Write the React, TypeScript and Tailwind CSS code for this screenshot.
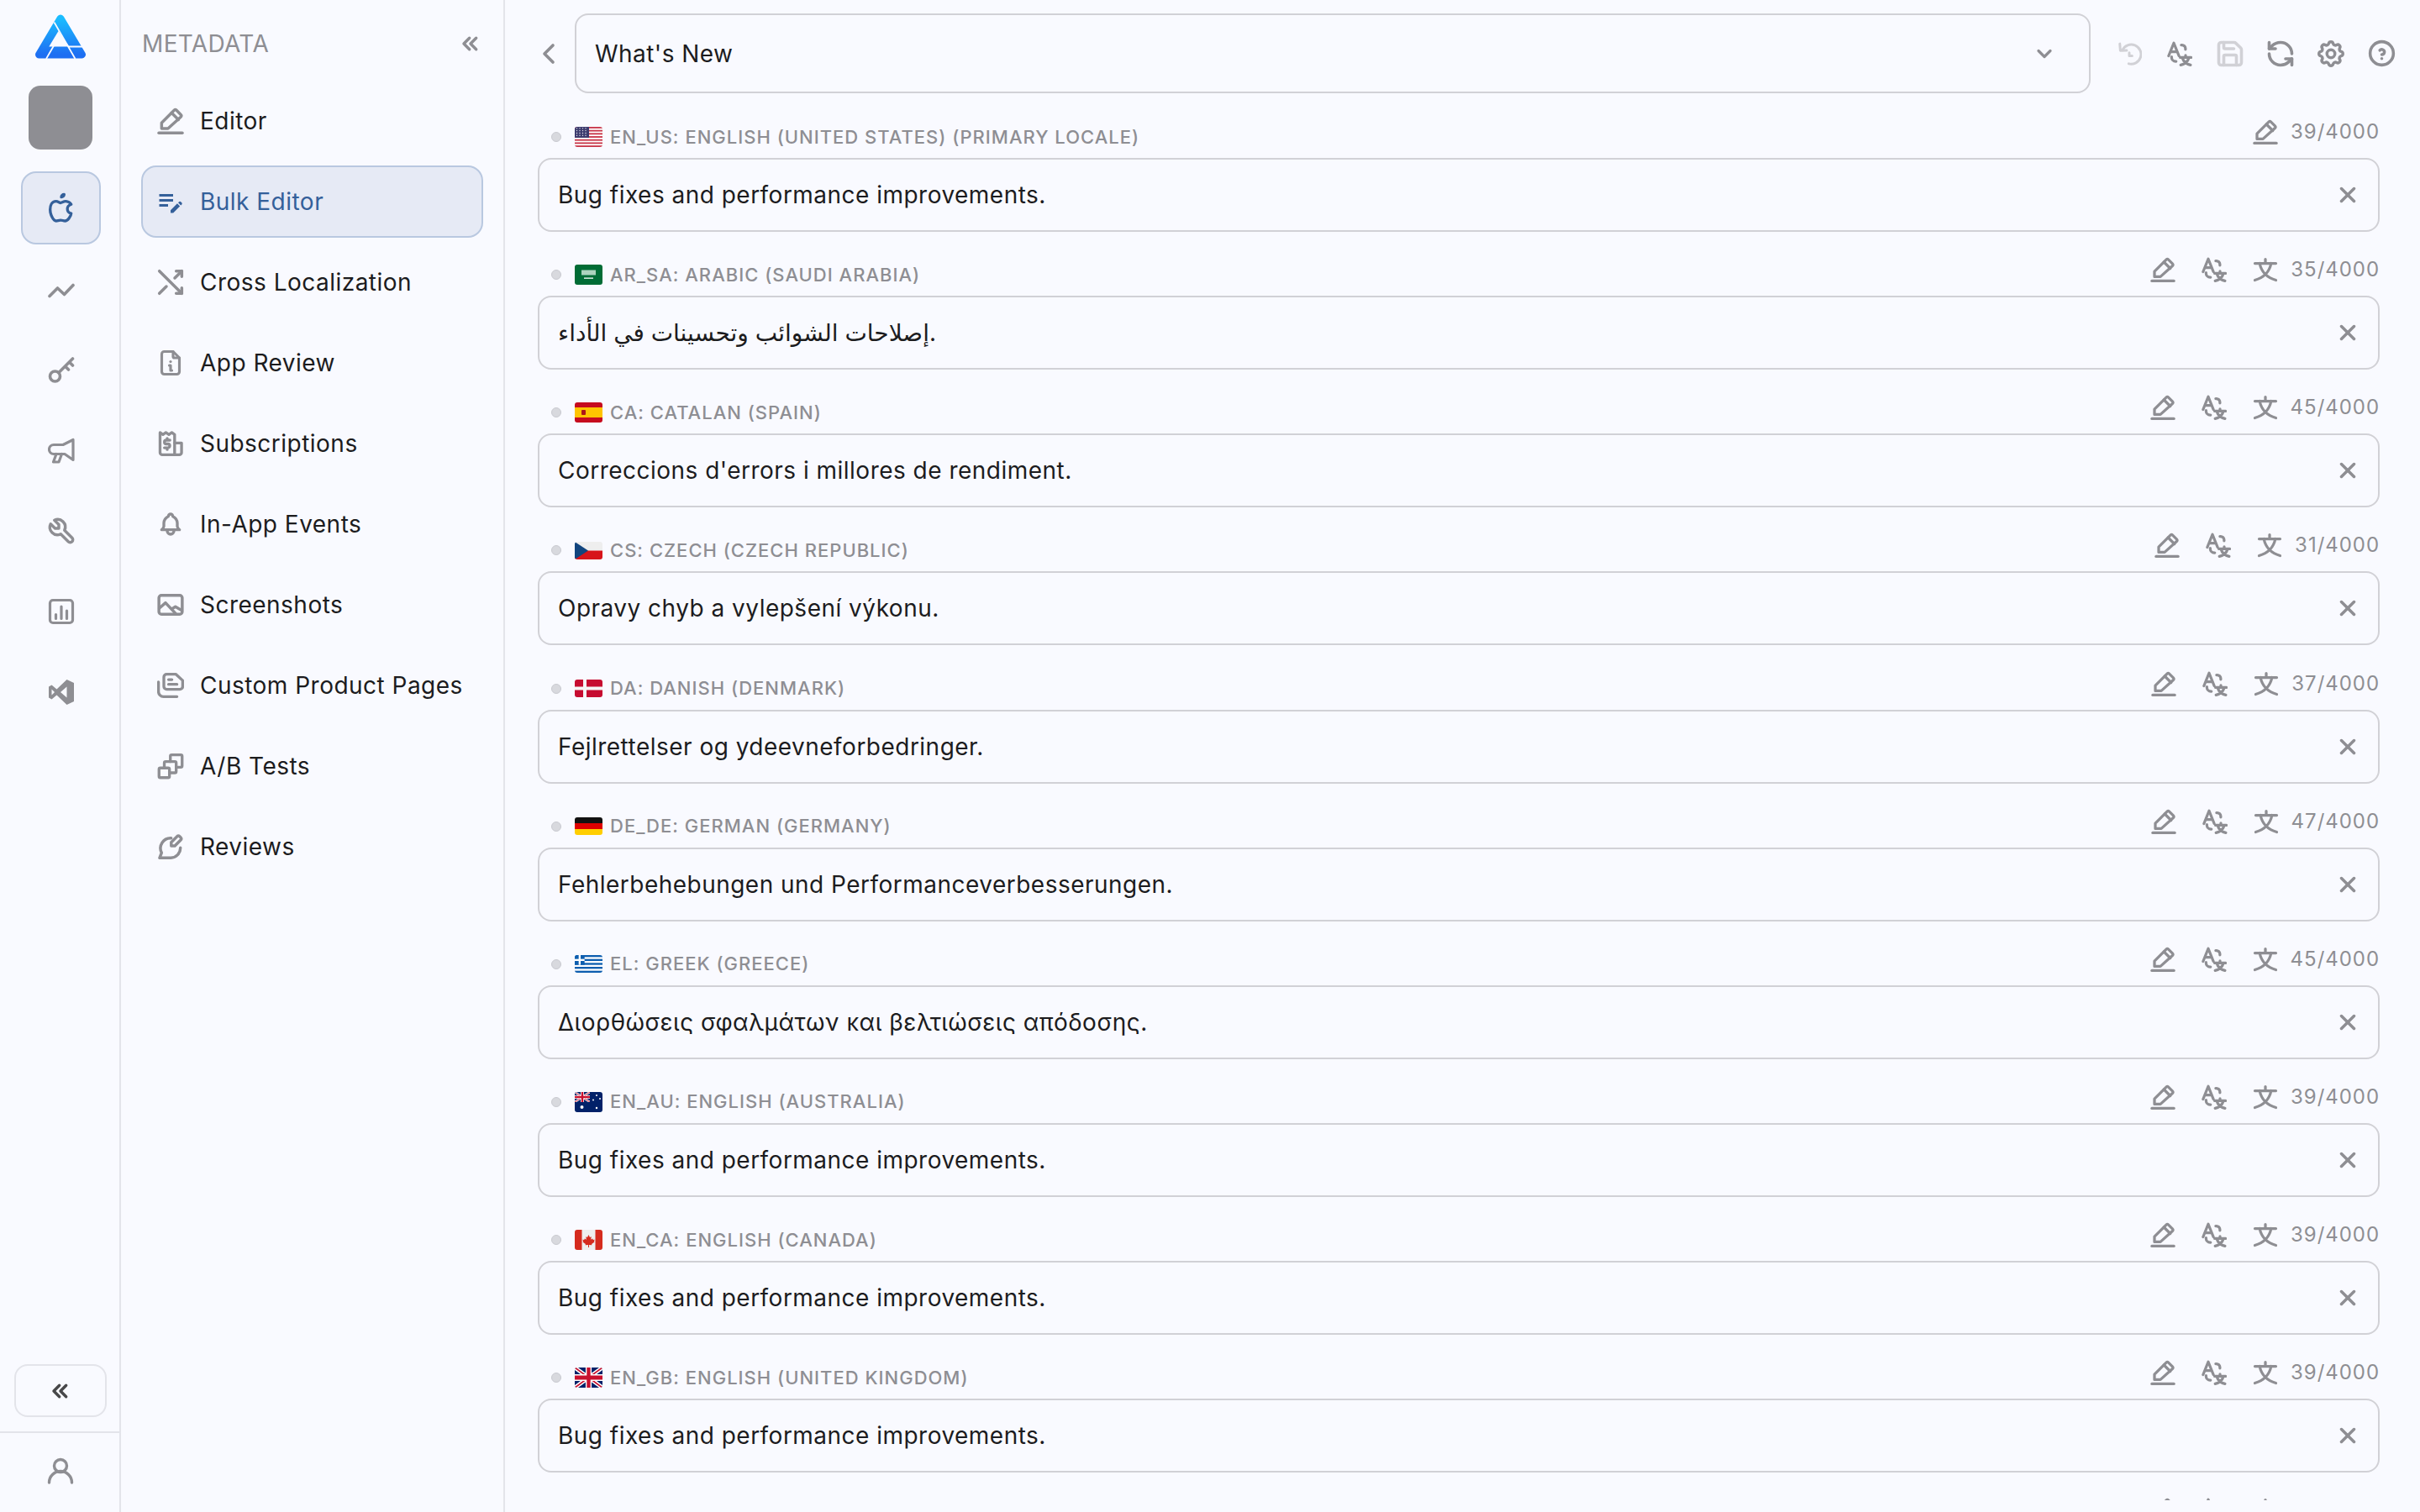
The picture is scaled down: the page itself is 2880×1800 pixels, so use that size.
import React from "react";
import { TbArrowsCross, TbFileInfo, TbBell, TbBrandApple, TbTool, TbChevronsLeft, TbChevronLeft, TbChevronDown, TbX, TbSettings, TbHelpCircle } from "react-icons/tb";
import { LuSave, LuRefreshCcw } from "react-icons/lu";
import { MdEditNote } from "react-icons/md";

type SvgP = { size?: number; className?: string };
const S = ({ size = 32, className, children, vb = "0 0 24 24", sw = 2.4 }: SvgP & { children: React.ReactNode; vb?: string; sw?: number }) => (
  <svg width={size} height={size} viewBox={vb} fill="none" stroke="currentColor" strokeWidth={sw} strokeLinecap="round" strokeLinejoin="round" className={`shrink-0 ${className ?? ""}`}>
    {children}
  </svg>
);

const PencilLine = (p: SvgP) => (
  <S {...p} sw={2.6}>
    <path d="M1.500 22.700h21" />
    <path d="M4 18.700v-5L15.200 2.500a1.500 1.500 0 0 1 2.100 0l3.800 3.800a1.500 1.500 0 0 1 0 2.100L9.700 18.700z" />
    <path d="M13 4.800l6 6" />
  </S>
);
const Receipt = (p: SvgP) => (
  <S {...p} sw={2.5}>
    <path d="M2.600 2.200l2.600 1.800 2.600-1.800 2.700 1.800 2.600-1.800 2.500 1.800V22H4.600a2 2 0 0 1-2-2z" />
    <path d="M15.600 11.500h6.200V20a2 2 0 0 1-2 2h-4.200" />
    <path d="M11.400 9H8.200a1.500 1.500 0 0 0 0 3.400h1.400a1.500 1.500 0 0 1 0 3.400H6.500M9 7.400v1.600M9 15.800v1.600" />
  </S>
);
const Landscape = (p: SvgP) => (
  <S {...p} sw={2.6}>
    <rect x="1.600" y="3.600" width="20.800" height="16.800" rx="2.200" />
    <path d="M2 15l5.500-4.800 9 9.600" />
    <path d="M13.300 15.500l3-1.800 5.500 3.200" />
  </S>
);
const Pages = (p: SvgP) => (
  <S {...p} sw={2.5}>
    <path d="M8.500 2h8.300l6 5.600v5.400a2.500 2.500 0 0 1-2.500 2.500H8.500A2.500 2.500 0 0 1 6 13V4.500A2.500 2.500 0 0 1 8.500 2z" />
    <path d="M10.200 6.800h3M10.200 11h7.500" />
    <path d="M1.200 9v8.500a4.500 4.500 0 0 0 4.500 4.500h12" />
  </S>
);
const ABTests = (p: SvgP) => (
  <S {...p} sw={2.5}>
    <rect x="1.700" y="13.700" width="9.300" height="8.600" rx="1.200" />
    <path d="M6.400 13.700V9.200a1.200 1.200 0 0 1 1.200-1.200h8.200a1.200 1.200 0 0 1 1.200 1.200v7.600a1.200 1.200 0 0 1-1.200 1.200H11" />
    <path d="M11.800 8V3.200A1.200 1.200 0 0 1 13 2h8.100a1.200 1.200 0 0 1 1.200 1.200v8.600a1.200 1.200 0 0 1-1.200 1.200H17" />
  </S>
);
const ReviewEdit = (p: SvgP) => (
  <S {...p} sw={2.6}>
    <path d="M12.500 4.300A9 9 0 0 0 4 17.400L2.200 22h10a9 9 0 0 0 8.600-9" />
    <path d="M12.600 11.200V8L18 2.600a1.300 1.300 0 0 1 1.900 0l1.300 1.300a1.300 1.300 0 0 1 0 1.900l-5.400 5.400z" />
  </S>
);
const Zigzag = (p: SvgP) => (
  <S {...p} vb="0 0 32 32" sw={3.6}>
    <path d="M2 24.500l9.500-9.500 8 7.500L30 11.500" />
  </S>
);
const KeyIcon = (p: SvgP) => (
  <S {...p} vb="0 0 32 32" sw={3.6}>
    <circle cx="8.500" cy="24" r="6" />
    <path d="M13 19.500L29.500 3M25.500 7l4 4M20.500 12l4 4" />
  </S>
);
const Megaphone = (p: SvgP) => (
  <S {...p} vb="0 0 32 32" sw={3.2}>
    <path d="M30 3.500V27.500L20 20.500H7a5.500 5.500 0 0 1 0-11h11z" />
    <path d="M10 20.500L6.500 30h6.500l3.500-9.500" />
  </S>
);
const UserIcon = (p: SvgP) => (
  <S {...p} vb="0 0 32 32" sw={3.4}>
    <circle cx="16" cy="10" r="7.500" />
    <path d="M2.500 30a13.500 13.500 0 0 1 27 0" />
  </S>
);
const ChartBox = (p: SvgP) => (
  <S {...p} vb="0 0 32 32" sw={3.2}>
    <rect x="2.500" y="2.500" width="27" height="27" rx="3.500" />
    <path d="M9.500 19.500v5M16 10v14.500M22.500 15v9.500" />
  </S>
);
const VSIcon = ({ size = 32, className }: SvgP) => (
  <svg width={size} height={size} viewBox="0 0 32 32" className={`shrink-0 ${className ?? ""}`} fill="currentColor">
    <path fillRule="evenodd" d="M22.500 1L31 5v22l-8.500 4L10.500 19.500 4.500 24.500 1 22.500V9.500L4.500 7.500l6 5zM22.500 9.500L15 16l7.500 6.500zM4.500 12.500v7L8 16z" />
  </svg>
);
const TranslateIcon = (p: SvgP) => (
  <S {...p} sw={2.6}>
    <path d="M1.500 14L6.400 1.800 11.300 14M3.300 10h6.200" />
    <path d="M13.500 3.600h.6a3.400 3.400 0 0 1 3.400 3.400v.8" />
    <path d="M4.300 14.800v.5a3.900 3.900 0 0 0 3.900 3.900h.4" />
    <path d="M12.500 15.500h10.300M17.600 13.500v2M14.500 15.800c1 3.300 3.500 5.900 7.800 6.900M20.800 15.800c-1 3.300-3.500 5.900-7.800 6.900" />
  </S>
);
const WenIcon = (p: SvgP) => (
  <S {...p} sw={2.600}>
    <path d="M2 6h20M12 2v4M6.500 6c1.500 7 6.500 13.500 15.500 16M17.500 6C16 13 11 19.500 2 22" />
  </S>
);
const HistoryIcon = (p: SvgP) => (
  <S {...p} vb="0 0 24 24" sw={2.4}>
    <path d="M5.500 8.500A9.300 9.300 0 1 1 11.500 21.500" />
    <path d="M3 2.500l.5 6.500 6-.2" />
    <path d="M12 11v3h2.700" />
  </S>
);
const Logo = () => (
  <svg width="60" height="53" viewBox="0 0 60 53" className="shrink-0">
    <defs>
      <linearGradient id="lg" x1="0" y1="0" x2="0" y2="1">
        <stop offset="0" stopColor="#1bbcff" />
        <stop offset="1" stopColor="#1e6ef2" />
      </linearGradient>
    </defs>
    <path d="M30 5L55.500 48H4.500z" fill="url(#lg)" stroke="url(#lg)" strokeWidth="9" strokeLinejoin="round" />
    <path d="M27.500 20L16.300 38.500H40.500z" fill="#f9faff" />
    <path d="M22.500 9.500L47.500 53M13 53l11-19M40 38.500h20" stroke="#f9faff" strokeWidth="1.800" fill="none" />
  </svg>
);

const FlagBox = ({ h, children }: { h: 21 | 24; children: React.ReactNode }) => (
  <div className={`w-[33px] shrink-0 overflow-hidden rounded-[3px] ${h === 24 ? "h-[24px]" : "h-[21px]"}`}>{children}</div>
);
const UnionJack = () => (
  <>
    <rect width="60" height="40" fill="#012169" />
    <path d="M0 0L60 40M60 0L0 40" stroke="#fff" strokeWidth="8" />
    <path d="M0 0L60 40M60 0L0 40" stroke="#c8102e" strokeWidth="3" />
    <path d="M30 0V40M0 20H60" stroke="#fff" strokeWidth="13" />
    <path d="M30 0V40M0 20H60" stroke="#c8102e" strokeWidth="8" />
  </>
);
const flags: Record<string, React.ReactNode> = {
  us: (
    <FlagBox h={24}>
      <svg width="33" height="24" viewBox="0 0 33 26" preserveAspectRatio="none">
        <rect width="33" height="26" fill="#fff" />
        {[0, 4, 8, 12, 16, 20, 24].map((y) => <rect key={y} y={y} width="33" height="2" fill="#c8374a" />)}
        <rect width="17" height="14" fill="#3c3b6e" />
        {[2, 5, 8, 11].map((y) => [2.500, 6, 9.500, 13].map((x) => <circle key={`${x}${y}`} cx={x} cy={y} r="0.700" fill="#fff" />))}
      </svg>
    </FlagBox>
  ),
  sa: (
    <FlagBox h={24}>
      <svg width="33" height="24" viewBox="0 0 33 24">
        <rect width="33" height="24" fill="#006c35" />
        <rect x="8" y="6.500" width="17" height="6" fill="#d8eee0" opacity="0.800" />
        <rect x="11" y="15.500" width="11" height="1.300" fill="#fff" />
      </svg>
    </FlagBox>
  ),
  es: (
    <FlagBox h={24}>
      <svg width="33" height="24" viewBox="0 0 33 24">
        <rect width="33" height="24" fill="#c60b1e" />
        <rect y="6" width="33" height="12" fill="#ffc400" />
        <rect x="8" y="9" width="5" height="6" rx="1" fill="#ad1519" />
      </svg>
    </FlagBox>
  ),
  cz: (
    <FlagBox h={21}>
      <svg width="33" height="21" viewBox="0 0 33 21">
        <rect width="33" height="10.500" fill="#eeeeee" />
        <rect y="10.500" width="33" height="10.500" fill="#d7141a" />
        <path d="M0 0L16 10.500L0 21z" fill="#11457e" />
      </svg>
    </FlagBox>
  ),
  dk: (
    <FlagBox h={21}>
      <svg width="33" height="21" viewBox="0 0 33 21">
        <rect width="33" height="21" fill="#c60c30" />
        <rect x="10" width="4" height="21" fill="#f5f5f5" />
        <rect y="8.500" width="33" height="4" fill="#f5f5f5" />
      </svg>
    </FlagBox>
  ),
  de: (
    <FlagBox h={21}>
      <svg width="33" height="21" viewBox="0 0 33 21">
        <rect width="33" height="7" fill="#111" />
        <rect y="7" width="33" height="7" fill="#dd0000" />
        <rect y="14" width="33" height="7" fill="#ffce00" />
      </svg>
    </FlagBox>
  ),
  gr: (
    <FlagBox h={21}>
      <svg width="33" height="21" viewBox="0 0 33 21">
        <rect width="33" height="21" fill="#0d5eaf" />
        {[2.330, 7, 11.660, 16.330].map((y) => <rect key={y} y={y} width="33" height="2.330" fill="#fff" />)}
        <rect width="11.660" height="11.660" fill="#0d5eaf" />
        <rect x="4.660" width="2.330" height="11.660" fill="#fff" />
        <rect y="4.660" width="11.660" height="2.330" fill="#fff" />
      </svg>
    </FlagBox>
  ),
  au: (
    <FlagBox h={24}>
      <svg width="33" height="24" viewBox="0 0 33 24">
        <rect width="33" height="24" fill="#012169" />
        <svg width="18" height="12" viewBox="0 0 60 40"><UnionJack /></svg>
        <circle cx="8.500" cy="18" r="2" fill="#fff" />
        <circle cx="26" cy="4" r="1" fill="#fff" />
        <circle cx="22" cy="9.500" r="1" fill="#fff" />
        <circle cx="30" cy="8" r="1" fill="#fff" />
        <circle cx="26" cy="19" r="1.200" fill="#fff" />
      </svg>
    </FlagBox>
  ),
  ca: (
    <FlagBox h={24}>
      <svg width="33" height="24" viewBox="0 0 33 24">
        <rect width="33" height="24" fill="#eeeeee" />
        <rect width="8.500" height="24" fill="#d52b1e" />
        <rect x="24.500" width="8.500" height="24" fill="#d52b1e" />
        <path d="M16.500 6l1.500 3 1.800-.8-.7 3.600 2.100-1.300.5 1.500 2 -.3-.8 2.300.7.5-3.500 2.500.3 1.300-3.400-.4V21h-1v-3.100l-3.400.4.3-1.300-3.500-2.500.7-.5-.8-2.300 2 .3.500-1.500 2.100 1.300-.7-3.600 1.800.8z" fill="#d52b1e" />
      </svg>
    </FlagBox>
  ),
  gb: (
    <FlagBox h={24}>
      <svg width="33" height="24" viewBox="0 0 60 40" preserveAspectRatio="none"><UnionJack /></svg>
    </FlagBox>
  ),
};

const rows = [
  { f: "us", label: "EN_US: ENGLISH (UNITED STATES) (PRIMARY LOCALE)", text: "Bug fixes and performance improvements.", n: 39, primary: true },
  { f: "sa", label: "AR_SA: ARABIC (SAUDI ARABIA)", text: "إصلاحات الشوائب وتحسينات في الأداء.", n: 35 },
  { f: "es", label: "CA: CATALAN (SPAIN)", text: "Correccions d'errors i millores de rendiment.", n: 45 },
  { f: "cz", label: "CS: CZECH (CZECH REPUBLIC)", text: "Opravy chyb a vylepšení výkonu.", n: 31 },
  { f: "dk", label: "DA: DANISH (DENMARK)", text: "Fejlrettelser og ydeevneforbedringer.", n: 37 },
  { f: "de", label: "DE_DE: GERMAN (GERMANY)", text: "Fehlerbehebungen und Performanceverbesserungen.", n: 47 },
  { f: "gr", label: "EL: GREEK (GREECE)", text: "Διορθώσεις σφαλμάτων και βελτιώσεις απόδοσης.", n: 45 },
  { f: "au", label: "EN_AU: ENGLISH (AUSTRALIA)", text: "Bug fixes and performance improvements.", n: 39 },
  { f: "ca", label: "EN_CA: ENGLISH (CANADA)", text: "Bug fixes and performance improvements.", n: 39 },
  { f: "gb", label: "EN_GB: ENGLISH (UNITED KINGDOM)", text: "Bug fixes and performance improvements.", n: 39 },
];

const railIcons = [
  <Zigzag size={32} />,
  <KeyIcon size={32} />,
  <Megaphone size={32} />,
  <TbTool size={36} strokeWidth={2.3} />,
  <ChartBox size={32} />,
  <VSIcon size={32} />,
];

const navItems: { label: string; icon: React.ReactNode; active?: boolean }[] = [
  { label: "Editor", icon: <PencilLine size={32} /> },
  { label: "Bulk Editor", icon: <MdEditNote size={36} className="-mx-[2px]" />, active: true },
  { label: "Cross Localization", icon: <TbArrowsCross size={40} strokeWidth={2.1} className="-mx-[4px]" /> },
  { label: "App Review", icon: <TbFileInfo size={36} strokeWidth={2.1} className="-mx-[2px]" /> },
  { label: "Subscriptions", icon: <Receipt size={32} /> },
  { label: "In-App Events", icon: <TbBell size={32} strokeWidth={2.5} /> },
  { label: "Screenshots", icon: <Landscape size={32} /> },
  { label: "Custom Product Pages", icon: <Pages size={32} /> },
  { label: "A/B Tests", icon: <ABTests size={32} /> },
  { label: "Reviews", icon: <ReviewEdit size={32} /> },
];

function Box({ children, className }: { children: React.ReactNode; className?: string }) {
  return <div className={`flex w-[30px] shrink-0 items-center justify-center ${className ?? ""}`}>{children}</div>;
}

export default function App() {
  return (
    <div className="flex h-[1800px] w-full overflow-hidden bg-[#f9faff] font-[Inter,'DejaVu_Sans','Noto_Sans',sans-serif] text-[#1c1c1e]">
      <aside className="flex h-full w-[144px] shrink-0 flex-col border-r-2 border-[#e3e4ea] pl-[2px]">
        <div className="flex flex-col items-center pt-[17px]">
          <Logo />
          <div className="mt-[32px] h-[76px] w-[76px] rounded-[14px] bg-[#8e8e93]" />
        </div>
        <div className="mt-[26px] flex flex-col gap-[9px] pl-[23px] pr-[22px]">
          <div className="flex h-[87px] items-center justify-center rounded-[18px] border-2 border-[#b9c8e0] bg-[#e6eaf5] text-[#34609a]">
            <TbBrandApple size={40} strokeWidth={2} />
          </div>
          {railIcons.map((ic, i) => (
            <div key={i} className="flex h-[87px] items-center justify-center text-[#8e8e93]">{ic}</div>
          ))}
        </div>
        <div className="mt-auto">
          <div className="mx-[15px] mb-[17px] flex h-[63px] w-[110px] items-center justify-center rounded-[16px] border-2 border-[#e3e4ea] text-[#48484a]">
            <TbChevronsLeft size={32} strokeWidth={2.6} />
          </div>
          <div className="-ml-[2px] flex h-[96px] items-center justify-center border-t-2 border-[#e3e4ea] pb-[4px] pl-[2px] text-[#8e8e93]">
            <UserIcon size={32} />
          </div>
        </div>
      </aside>

      <nav className="flex h-full w-[457px] shrink-0 flex-col border-r-2 border-[#e3e4ea] pl-[24px] pr-[24px]">
        <div className="flex h-[101px] shrink-0 items-center justify-between pl-[1px] pt-[3px]">
          <span className="text-[28px] tracking-[0.34px] text-[#8e8e93]">METADATA</span>
          <TbChevronsLeft size={32} strokeWidth={2.6} className="mr-[-1px] text-[#8e8e93]" />
        </div>
        <div className="flex flex-col gap-[10px]">
          {navItems.map((it) => (
            <div
              key={it.label}
              className={`flex h-[86px] items-center gap-[19px] rounded-[18px] border-2 pl-[17px] text-[28px] tracking-[0.48px] ${
                it.active ? "border-[#b9c8e0] bg-[#e6eaf5] text-[#34609a]" : "border-transparent"
              }`}
            >
              <span className={`flex w-[32px] shrink-0 items-center justify-center ${it.active ? "" : "text-[#8e8e93]"}`}>{it.icon}</span>
              <span>{it.label}</span>
            </div>
          ))}
        </div>
      </nav>

      <main className="flex h-full min-w-0 flex-1 flex-col pl-[39px]">
        <div className="flex h-[128px] shrink-0 items-start pr-[31px] pt-[16px]">
          <div className="flex h-[95px] w-[44px] shrink-0 items-center text-[#8e8e93]">
            <TbChevronLeft size={40} strokeWidth={2.2} className="-ml-[7px]" />
          </div>
          <div className="flex h-[95px] min-w-0 flex-1 items-center justify-between rounded-[16px] border-2 border-[#d1d1d6] pl-[22px] pr-[39px] text-[28px] tracking-[0.45px]">
            <span>What's New</span>
            <TbChevronDown size={28} strokeWidth={2.8} className="text-[#8e8e93]" />
          </div>
          <div className="ml-[31px] flex h-[95px] items-center gap-[30px] text-[#8e8e93]">
            <Box className="text-[#d1d1d6]"><HistoryIcon size={30} /></Box>
            <Box><TranslateIcon size={30} /></Box>
            <Box className="text-[#d1d1d6]"><LuSave size={36} strokeWidth={2.4} className="shrink-0" /></Box>
            <Box><LuRefreshCcw size={36} strokeWidth={2.4} className="shrink-0" /></Box>
            <Box><TbSettings size={38} strokeWidth={2.2} className="shrink-0" /></Box>
            <Box><TbHelpCircle size={37} strokeWidth={2.3} className="shrink-0" /></Box>
          </div>
        </div>

        <div className="h-[1658px] shrink-0 overflow-hidden pr-[48px]">
          {rows.map((r, i) => (
            <section key={i} className="h-[164.14px]">
              <div className="flex h-[60px] items-start justify-between">
                <div className="ml-[16px] mt-[22px] flex h-[26px] items-center">
                  <span className="h-[12px] w-[12px] shrink-0 rounded-full border border-[#c9cad0] bg-[#d8d9de]" />
                  <span className="ml-[16px]">{flags[r.f]}</span>
                  <span className="ml-[9px] whitespace-nowrap text-[22px] font-medium tracking-[1px] text-[#8e8e93]">{r.label}</span>
                </div>
                <div className="mt-[14px] flex h-[30px] items-center text-[#8e8e93]">
                  <div className="flex items-center gap-[31px]">
                    {!r.primary && <Box><PencilLine size={30} /></Box>}
                    {!r.primary && <Box><TranslateIcon size={30} /></Box>}
                    {r.primary ? <Box><PencilLine size={30} /></Box> : <Box><WenIcon size={30} /></Box>}
                  </div>
                  <span className="ml-[15px] text-[24px] tracking-[0.96px]">{r.n}/4000</span>
                </div>
              </div>
              <div className="flex h-[88px] items-center justify-between rounded-[16px] border-2 border-[#d1d1d6] pl-[22px] pr-[21px] text-[28px] tracking-[0.48px]">
                <span>{r.text}</span>
                <TbX size={30} strokeWidth={2.8} className="shrink-0 text-[#8e8e93]" />
              </div>
            </section>
          ))}
          <section className="flex h-[44px] justify-end pt-[14px] text-[#8e8e93]">
            <div className="mr-[121px] flex h-[30px] gap-[31px]">
              <Box><PencilLine size={30} /></Box>
              <Box><TranslateIcon size={30} /></Box>
              <Box><WenIcon size={30} /></Box>
            </div>
          </section>
        </div>
      </main>
    </div>
  );
}
